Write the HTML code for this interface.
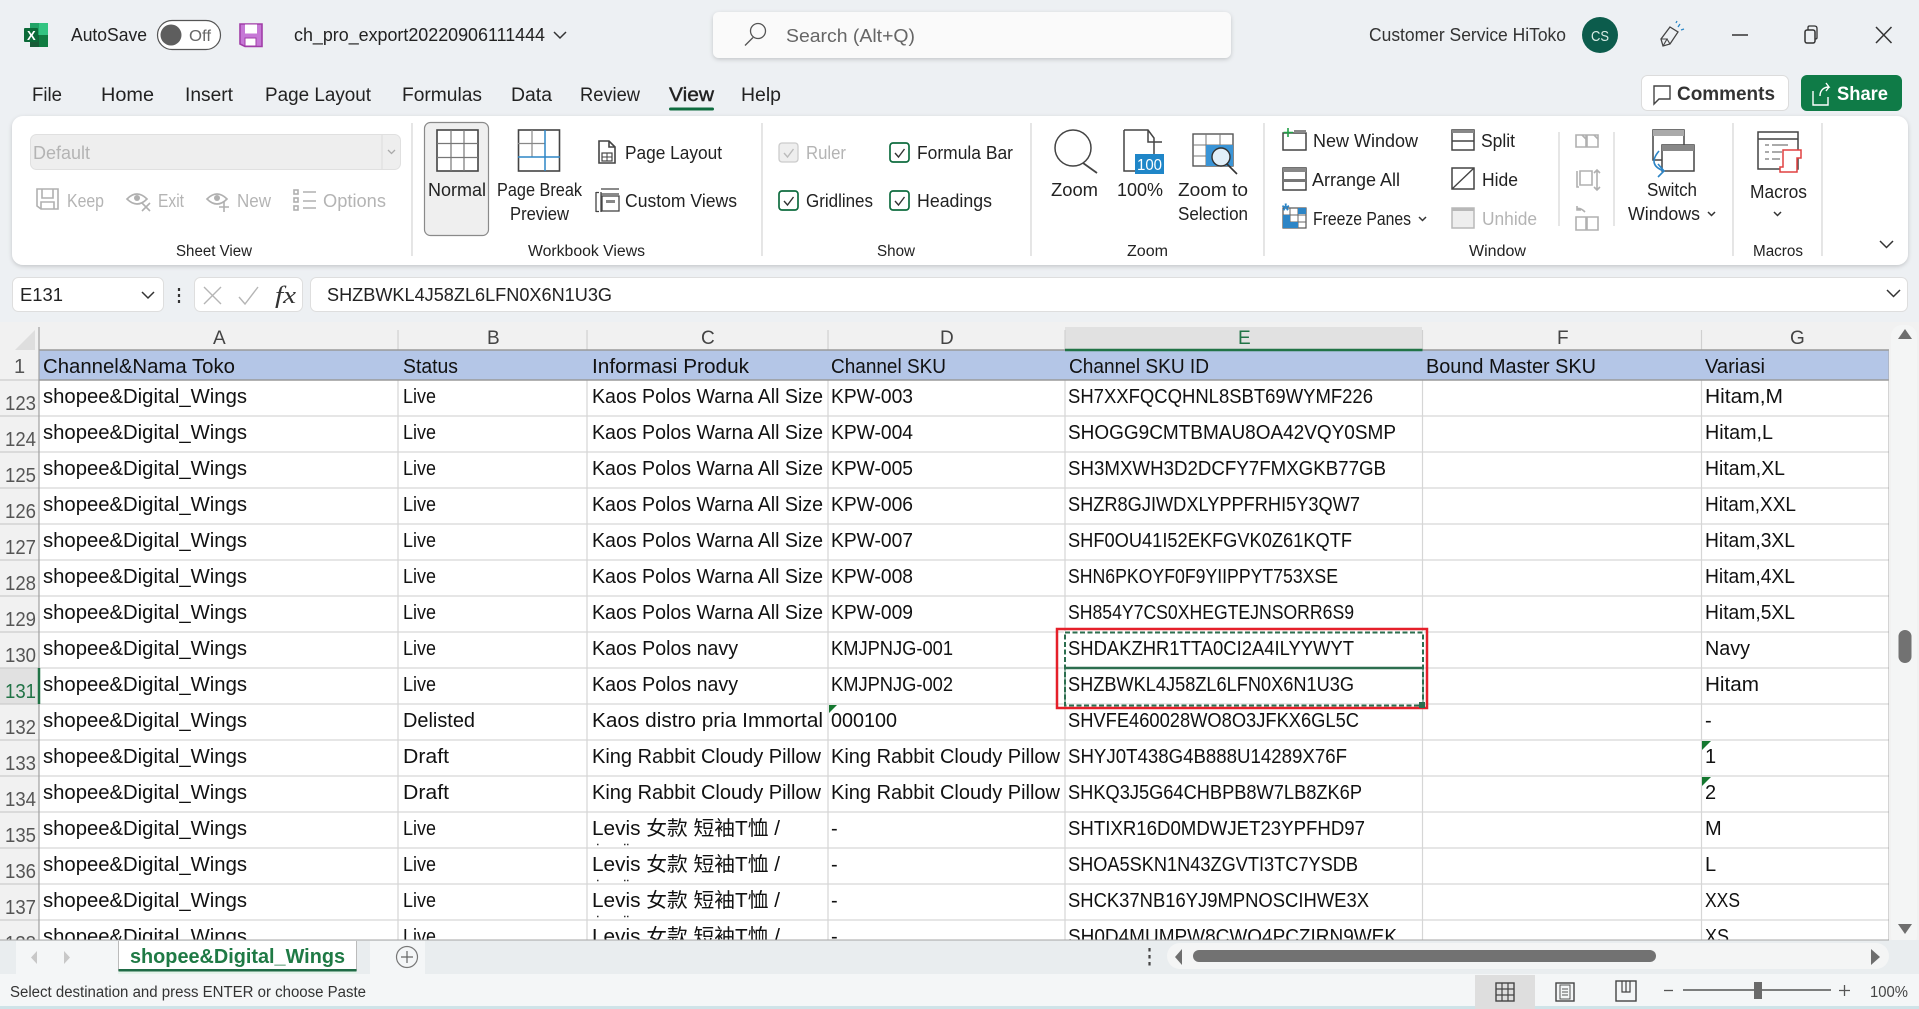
<!DOCTYPE html>
<html lang="en"><head><meta charset="utf-8"><title>ch_pro_export20220906111444 - Excel</title>
<style>
html,body{margin:0;padding:0;background:#edf0f3;width:1919px;height:1009px;overflow:hidden}
svg{position:absolute;left:0;top:0;display:block}
text{font-family:"Liberation Sans","Noto Sans CJK SC",sans-serif;fill:#222;font-size:18px;white-space:pre}
.sm{font-size:15.5px}
.g{fill:#b4b4b4}
.c{font-size:20px;fill:#111}
.n{font-size:20px;fill:#555}
.h{font-size:19px;fill:#444}
.ic{fill:none;stroke:#444;stroke-width:1.6}
.icg{fill:none;stroke:#b0b0b0;stroke-width:1.6}
.grid{stroke:#d6d6d6;stroke-width:1.2}
.sep{stroke:#d4d4d4;stroke-width:1.2}
</style></head><body>
<svg width="1919" height="1009" viewBox="0 0 1919 1009" xmlns="http://www.w3.org/2000/svg">
<defs>
<filter id="sh" x="-2%" y="-10%" width="104%" height="125%"><feDropShadow dx="0" dy="1.5" stdDeviation="2" flood-color="#000" flood-opacity=".18"/></filter>
<clipPath id="gc"><rect x="0" y="327" width="1889" height="613"/></clipPath>
</defs>

<!-- title bar -->
<rect x="30" y="23" width="18" height="24" rx="1.5" fill="#107c41"/>
<rect x="30" y="23" width="9" height="12" fill="#21a366"/><rect x="39" y="23" width="9" height="12" fill="#33c481"/>
<rect x="39" y="35" width="9" height="12" fill="#107c41"/><rect x="30" y="35" width="9" height="12" fill="#185c37"/>
<rect x="24" y="28" width="14" height="14" rx="1" fill="#0b6a38"/>
<text x="27" y="40" style="font-size:13px;fill:#fff" font-weight="bold">X</text>
<text x="71" y="41" textLength="76" lengthAdjust="spacingAndGlyphs" style="font-size:18px">AutoSave</text>
<rect x="157.500" y="20.500" width="63" height="29" rx="14.500" fill="#fff" stroke="#555" stroke-width="1.200"/>
<circle cx="171" cy="35" r="10.500" fill="#5e5e5e"/>
<text x="189" y="41" textLength="22" lengthAdjust="spacingAndGlyphs" style="font-size:16px;fill:#666">Off</text>
<path d="M240 24H262V46.500H245L240 44Z" fill="#c678d6" stroke="#a13ea8" stroke-width="1.600"/>
<rect x="245" y="24.500" width="12" height="9" fill="#fff"/><rect x="245" y="38" width="11" height="8" fill="#fff" stroke="#a13ea8"/>
<text x="294" y="41" textLength="251" lengthAdjust="spacingAndGlyphs" style="font-size:18px">ch_pro_export20220906111444</text>
<path d="M554 32l6 6 6-6" fill="none" stroke="#333" stroke-width="1.500"/>

<rect x="713" y="12" width="518" height="46" rx="6" fill="#fafafa" filter="url(#sh)"/>
<circle cx="758" cy="31" r="7.500" fill="none" stroke="#555" stroke-width="1.300"/><path d="M753 37.500L745 45.500" stroke="#555" stroke-width="1.300"/>
<text x="786" y="42" textLength="129" lengthAdjust="spacingAndGlyphs" style="font-size:18.500px;fill:#666">Search (Alt+Q)</text>

<text x="1369" y="41" textLength="197" lengthAdjust="spacingAndGlyphs" style="font-size:18px;fill:#333">Customer Service HiToko</text>
<circle cx="1600" cy="35" r="18" fill="#0c5c4c"/>
<text x="1591" y="41" textLength="18" lengthAdjust="spacingAndGlyphs" style="font-size:15px;fill:#d9ece6">CS</text>
<path d="M1670 27L1678 32L1670 44L1663 46L1661 39Z" fill="none" stroke="#444" stroke-width="1.300"/><path d="M1663 46l4-7 -6 0M1667 39l3 5" fill="none" stroke="#444" stroke-width="1.100"/>
<path d="M1678 27l2-3M1681 30l3-1M1676 23l1-2" stroke="#2b88c8" stroke-width="1.300"/>
<path d="M1732 35H1748" stroke="#333" stroke-width="1.500"/>
<rect x="1805" y="30" width="10" height="13" rx="2" fill="none" stroke="#333" stroke-width="1.500"/><path d="M1808 30v-2.500q0-1.500 1.500-1.500h5q2.500 0 2.500 2.500v9q0 1.500-1.500 1.500" fill="none" stroke="#333" stroke-width="1.300"/>
<path d="M1876 27l15.500 16M1891.500 27L1876 43" stroke="#333" stroke-width="1.500"/>

<!-- tabs -->
<text x="32" y="101" textLength="30" lengthAdjust="spacingAndGlyphs" style="font-size:19px">File</text>
<text x="101" y="101" textLength="53" lengthAdjust="spacingAndGlyphs" style="font-size:19px">Home</text>
<text x="185" y="101" textLength="48" lengthAdjust="spacingAndGlyphs" style="font-size:19px">Insert</text>
<text x="265" y="101" textLength="106" lengthAdjust="spacingAndGlyphs" style="font-size:19px">Page Layout</text>
<text x="402" y="101" textLength="80" lengthAdjust="spacingAndGlyphs" style="font-size:19px">Formulas</text>
<text x="511" y="101" textLength="41" lengthAdjust="spacingAndGlyphs" style="font-size:19px">Data</text>
<text x="580" y="101" textLength="60" lengthAdjust="spacingAndGlyphs" style="font-size:19px">Review</text>
<text x="669" y="101" textLength="45" lengthAdjust="spacingAndGlyphs" style="font-size:19px;stroke:#222;stroke-width:.4">View</text>
<text x="741" y="101" textLength="40" lengthAdjust="spacingAndGlyphs" style="font-size:19px">Help</text>
<rect x="669" y="107.500" width="45" height="3" rx="1.500" fill="#0f6c3f"/>

<rect x="1641.500" y="75.500" width="147" height="35" rx="6" fill="#fff" stroke="#dcdcdc"/>
<path d="M1654 86H1670V99H1659L1654 104Z" fill="none" stroke="#444" stroke-width="1.400"/>
<text x="1677" y="100" textLength="98" lengthAdjust="spacingAndGlyphs" font-weight="bold" style="font-size:19px;fill:#333">Comments</text>
<rect x="1801" y="75" width="101" height="36" rx="6" fill="#0f7b47"/>
<path d="M1813 91v14h15v-8M1820 96c0-6 4-9 9-9l-3-4M1829 87l-3 4" fill="none" stroke="#fff" stroke-width="1.400"/>
<text x="1837" y="100" textLength="51" lengthAdjust="spacingAndGlyphs" font-weight="bold" style="font-size:19px;fill:#fff">Share</text>

<!-- ribbon -->
<rect x="12" y="116" width="1896" height="149" rx="11" fill="#fff" filter="url(#sh)"/>

<rect x="30.500" y="134.500" width="370" height="35" rx="6" fill="#eeeeee" stroke="#e0e0e0"/>
<path d="M382 135V169" stroke="#dcdcdc"/><path d="M388 150l3.500 3.500 3.500-3.500" fill="none" stroke="#aaa" stroke-width="1.300"/>
<text x="33" y="159" textLength="57" lengthAdjust="spacingAndGlyphs" style="font-size:18px;fill:#b4b4b4">Default</text>

<path d="M37 189H58V209H41L37 206Z" class="icg"/><path d="M42 189V198H53V189M41 209V202H54V209" class="icg"/>
<text x="67" y="207" textLength="37" lengthAdjust="spacingAndGlyphs" class="g" style="font-size:18px">Keep</text>
<path d="M127 199q10-10 20 0q-10 10-20 0z" class="icg"/><circle cx="137" cy="198" r="3" fill="#b0b0b0"/><path d="M142 203l8 8M150 203l-8 8" class="icg"/>
<text x="158" y="207" textLength="26" lengthAdjust="spacingAndGlyphs" class="g" style="font-size:18px">Exit</text>
<path d="M207 199q10-10 20 0q-10 10-20 0z" class="icg"/><circle cx="217" cy="198" r="3" fill="#b0b0b0"/><path d="M224 202V212M219 207H229" class="icg"/>
<text x="237" y="207" textLength="34" lengthAdjust="spacingAndGlyphs" class="g" style="font-size:18px">New</text>
<path d="M303 192H316M303 201H316M303 208H316" class="icg"/><rect x="294" y="190" width="4" height="4" class="icg"/><rect x="294" y="198" width="4" height="4" class="icg"/><rect x="294" y="206" width="4" height="4" class="icg"/>
<text x="323" y="207" textLength="63" lengthAdjust="spacingAndGlyphs" class="g" style="font-size:18px">Options</text>
<text x="176" y="256" textLength="76" lengthAdjust="spacingAndGlyphs" class="sm">Sheet View</text>
<path d="M412 123V256" class="sep"/>

<rect x="424.500" y="122.500" width="64" height="113" rx="6" fill="#efefef" stroke="#8a8a8a" stroke-width="1.200"/>
<rect x="437" y="130" width="41" height="41" fill="#fff" stroke="#444" stroke-width="1.600"/><path d="M451 130V171M464 130V171M437 143.500H478M437 157.500H478" stroke="#777" stroke-width="1.200"/>
<text x="428" y="196" textLength="58" lengthAdjust="spacingAndGlyphs" style="font-size:18px">Normal</text>
<rect x="518.500" y="130" width="41" height="41" fill="#fff" stroke="#444" stroke-width="1.600"/><path d="M532 130V157M518 143.500H545" stroke="#888" stroke-width="1.200"/><path d="M545 130V171M518 157H560" stroke="#2d85c6" stroke-width="1.500"/>
<text x="497" y="196" textLength="85" lengthAdjust="spacingAndGlyphs" style="font-size:18px">Page Break</text>
<text x="510" y="220" textLength="59" lengthAdjust="spacingAndGlyphs" style="font-size:18px">Preview</text>
<path d="M599 141H609L615 147V163H599Z" class="ic"/><path d="M609 141V147H615" class="ic"/><rect x="602" y="153" width="10" height="8" fill="none" stroke="#444" stroke-width="1.200"/><path d="M607 153v8M602 157h10" stroke="#444"/>
<text x="625" y="159" textLength="97" lengthAdjust="spacingAndGlyphs" style="font-size:18px">Page Layout</text>
<path d="M601 192V212M596 192.500H599M596 211.500H599M596 192V212" fill="none" stroke="#444" stroke-width="1.300"/><path d="M601 189H619M601 194H619" stroke="#444" stroke-width="1.300"/><rect x="602" y="196" width="17" height="15" fill="none" stroke="#444" stroke-width="1.300"/><path d="M606 200H615V203H606Z" fill="#888"/>
<text x="625" y="207" textLength="112" lengthAdjust="spacingAndGlyphs" style="font-size:18px">Custom Views</text>
<text x="528" y="256" textLength="117" lengthAdjust="spacingAndGlyphs" class="sm">Workbook Views</text>
<path d="M762 123V256" class="sep"/>

<rect x="779" y="143" width="19" height="19" rx="3" fill="#eee" stroke="#ccc" stroke-width="1.300"/><path d="M784 153l3.500 4 6-8" fill="none" stroke="#bbb" stroke-width="1.400"/>
<text x="806" y="159" textLength="40" lengthAdjust="spacingAndGlyphs" class="g" style="font-size:18px">Ruler</text>
<rect x="890" y="143" width="19" height="19" rx="3" fill="#fff" stroke="#0f6c3f" stroke-width="1.700"/><path d="M895 153l3.500 4 6-8" fill="none" stroke="#333" stroke-width="1.400"/>
<text x="917" y="159" textLength="96" lengthAdjust="spacingAndGlyphs" style="font-size:18px">Formula Bar</text>
<rect x="779" y="191" width="19" height="19" rx="3" fill="#fff" stroke="#0f6c3f" stroke-width="1.700"/><path d="M784 201l3.500 4 6-8" fill="none" stroke="#333" stroke-width="1.400"/>
<text x="806" y="207" textLength="67" lengthAdjust="spacingAndGlyphs" style="font-size:18px">Gridlines</text>
<rect x="890" y="191" width="19" height="19" rx="3" fill="#fff" stroke="#0f6c3f" stroke-width="1.700"/><path d="M895 201l3.500 4 6-8" fill="none" stroke="#333" stroke-width="1.400"/>
<text x="917" y="207" textLength="75" lengthAdjust="spacingAndGlyphs" style="font-size:18px">Headings</text>
<text x="877" y="256" textLength="38" lengthAdjust="spacingAndGlyphs" class="sm">Show</text>
<path d="M1031 123V256" class="sep"/>

<circle cx="1073" cy="148" r="18" fill="none" stroke="#444" stroke-width="1.500"/><path d="M1083 163L1097 173" stroke="#444" stroke-width="1.800"/>
<text x="1051" y="196" textLength="47" lengthAdjust="spacingAndGlyphs" style="font-size:18px">Zoom</text>
<path d="M1124 130H1148L1154 138V154M1135 171H1124V130M1148 130V142H1162" fill="none" stroke="#444" stroke-width="1.500"/>
<rect x="1135" y="154" width="29" height="20" fill="#1f86c8"/>
<text x="1137" y="170" textLength="25" lengthAdjust="spacingAndGlyphs" style="font-size:16px;fill:#fff">100</text>
<text x="1117" y="196" textLength="46" lengthAdjust="spacingAndGlyphs" style="font-size:18px">100%</text>
<rect x="1193" y="134" width="40" height="32" fill="none" stroke="#555" stroke-width="1.400"/><path d="M1206 134V166M1220 134V166M1193 145H1233M1193 156H1233" stroke="#777"/>
<rect x="1206" y="145" width="27" height="21" fill="#3a94d6"/>
<circle cx="1221" cy="157" r="9" fill="#fff" fill-opacity=".85" stroke="#333" stroke-width="1.400"/><path d="M1227 164L1237 174" stroke="#333" stroke-width="1.600"/>
<text x="1178" y="196" textLength="70" lengthAdjust="spacingAndGlyphs" style="font-size:18px">Zoom to</text>
<text x="1178" y="220" textLength="70" lengthAdjust="spacingAndGlyphs" style="font-size:18px">Selection</text>
<text x="1127" y="256" textLength="41" lengthAdjust="spacingAndGlyphs" class="sm">Zoom</text>
<path d="M1264 123V256" class="sep"/>

<rect x="1283" y="133" width="23" height="17" fill="#fff" stroke="#444" stroke-width="1.500"/><rect x="1294" y="130" width="12" height="3" fill="#888"/><path d="M1288 128V137M1283.500 132.500H1293" stroke="#22a047" stroke-width="1.600"/>
<text x="1313" y="147" textLength="105" lengthAdjust="spacingAndGlyphs" style="font-size:18px">New Window</text>
<rect x="1283" y="168" width="23" height="22" fill="#fff" stroke="#444" stroke-width="1.500"/><rect x="1283" y="168" width="23" height="4" fill="#888"/><rect x="1283" y="179" width="23" height="3" fill="#777"/>
<text x="1312" y="186" textLength="88" lengthAdjust="spacingAndGlyphs" style="font-size:18px">Arrange All</text>
<rect x="1283" y="208" width="23" height="20" fill="#fff" stroke="#555" stroke-width="1.200"/><path d="M1290 208V228M1298 208V228M1283 215H1306M1283 222H1306" stroke="#666"/><rect x="1283" y="215" width="7" height="13" fill="#2d85c6"/><rect x="1290" y="222" width="8" height="6" fill="#2d85c6"/><rect x="1298" y="208" width="8" height="6" fill="#2d85c6"/>
<text x="1282" y="217" style="font-size:19px;fill:#2d85c6" font-weight="bold">*</text>
<text x="1313" y="225" textLength="98" lengthAdjust="spacingAndGlyphs" style="font-size:18px">Freeze Panes</text>
<path d="M1419 217l3.500 3.500 3.500-3.500" fill="none" stroke="#333" stroke-width="1.500"/>
<rect x="1452" y="130" width="22" height="20" fill="#fff" stroke="#444" stroke-width="1.500"/><rect x="1452" y="130" width="22" height="3" fill="#888"/><path d="M1452 141H1474" stroke="#444" stroke-width="1.400"/>
<text x="1481" y="147" textLength="34" lengthAdjust="spacingAndGlyphs" style="font-size:18px">Split</text>
<rect x="1452" y="168" width="22" height="21" fill="#fff" stroke="#444" stroke-width="1.500"/><path d="M1452 189L1474 168" stroke="#444" stroke-width="1.400"/>
<text x="1482" y="186" textLength="36" lengthAdjust="spacingAndGlyphs" style="font-size:18px">Hide</text>
<rect x="1452" y="208" width="22" height="20" fill="#eee" stroke="#b8b8b8" stroke-width="1.500"/><rect x="1452" y="208" width="22" height="3" fill="#b8b8b8"/>
<text x="1482" y="225" textLength="55" lengthAdjust="spacingAndGlyphs" class="g" style="font-size:18px">Unhide</text>
<path d="M1559 132V226" class="sep"/>
<path d="M1576 135H1586V147H1576ZM1587 135H1598V147H1587Z" class="icg"/><path d="M1582 135L1586 139M1594 135L1598 139" class="icg"/>
<path d="M1580 171H1592V185H1580ZM1577 171V187H1579" class="icg"/><path d="M1597 170V190M1594 173l3-3 3 3M1594 187l3 3 3-3" class="icg"/>
<path d="M1576 217H1586V230H1576ZM1587 217H1598V230H1587Z" class="icg"/><path d="M1585 212q-5-5-8-3M1577 206v4h4" class="icg"/>
<path d="M1614 132V226" class="sep"/>
<rect x="1653" y="130" width="31" height="30" fill="#fff" stroke="#444" stroke-width="1.500"/><rect x="1653" y="130" width="31" height="6" fill="#aaa"/>
<rect x="1662" y="145" width="32" height="26" fill="#fff" stroke="#444" stroke-width="1.500"/><rect x="1662" y="145" width="32" height="6" fill="#888"/>
<path d="M1659 151q-12 14 5 20M1658 164l6 7-6 6" fill="none" stroke="#2d85c6" stroke-width="1.600"/>
<text x="1647" y="196" textLength="50" lengthAdjust="spacingAndGlyphs" style="font-size:18px">Switch</text>
<text x="1628" y="220" textLength="72" lengthAdjust="spacingAndGlyphs" style="font-size:18px">Windows</text>
<path d="M1708 212l3.500 3.500 3.500-3.500" fill="none" stroke="#333" stroke-width="1.500"/>
<path d="M1733 123V256" class="sep"/>
<rect x="1758" y="132" width="40" height="37" fill="#fff" stroke="#444" stroke-width="1.500"/><path d="M1758 139H1798" stroke="#444" stroke-width="1.500"/>
<path d="M1765 145H1769M1772 145H1788M1765 152H1769M1772 152H1782M1765 159H1769M1772 159H1780" stroke="#777" stroke-width="1.300"/>
<path d="M1783 150H1801V158H1797V172H1780V167H1783Z" fill="#fff" stroke="#e04040" stroke-width="1.500"/>
<text x="1750" y="198" textLength="57" lengthAdjust="spacingAndGlyphs" style="font-size:18px">Macros</text>
<path d="M1774 212l3.500 3.500 3.500-3.500" fill="none" stroke="#333" stroke-width="1.500"/>
<text x="1469" y="256" textLength="57" lengthAdjust="spacingAndGlyphs" class="sm">Window</text>
<text x="1753" y="256" textLength="50" lengthAdjust="spacingAndGlyphs" class="sm">Macros</text>
<path d="M1822 123V256" class="sep"/>
<path d="M1880 241l6.500 6.500 6.500-6.500" fill="none" stroke="#333" stroke-width="1.500"/>

<!-- formula bar -->
<rect x="12.500" y="277.500" width="151" height="34" rx="6" fill="#fff" stroke="#dedede"/>
<text x="20" y="301" textLength="43" lengthAdjust="spacingAndGlyphs" style="font-size:18px">E131</text>
<path d="M142 292l6 6 6-6" fill="none" stroke="#333" stroke-width="1.500"/>
<path d="M179 288v3M179 294v3M179 300v3" stroke="#333" stroke-width="2.200"/>
<rect x="194.500" y="277.500" width="108" height="34" rx="6" fill="#fff" stroke="#dedede"/>
<path d="M204 287l17 17M221 287l-17 17" stroke="#b5b5b5" stroke-width="1.400"/>
<path d="M239 297l6 7 13-17" fill="none" stroke="#b5b5b5" stroke-width="1.400"/>
<text x="275" y="303" textLength="21" lengthAdjust="spacingAndGlyphs" style="font-family:'Liberation Serif',serif;font-style:italic;font-size:24px;fill:#333">fx</text>
<rect x="310.500" y="277.500" width="1597" height="34" rx="6" fill="#fff" stroke="#dedede"/>
<text x="327" y="301" textLength="285" lengthAdjust="spacingAndGlyphs" style="font-size:18px">SHZBWKL4J58ZL6LFN0X6N1U3G</text>
<path d="M1887 290l6.500 6.500 6.500-6.500" fill="none" stroke="#333" stroke-width="1.500"/>

<!-- grid backgrounds -->
<rect x="0" y="322" width="1919" height="618" fill="#f1f1f1"/>
<rect x="39" y="350" width="1850" height="590" fill="#fff"/>
<rect x="39" y="350" width="1850" height="30" fill="#b4c6e7"/>
<path d="M15 350L35 330V350Z" fill="#dedede"/>
<rect x="1065" y="327" width="357" height="23" fill="#e1e1e1"/>
<rect x="0" y="668" width="39" height="36" fill="#e1e1e1"/>

<g clip-path="url(#gc)">
<!-- row lines -->
<path class="grid" d="M39 416H1889M39 452H1889M39 488H1889M39 524H1889M39 560H1889M39 596H1889M39 632H1889M39 668H1889M39 704H1889M39 740H1889M39 776H1889M39 812H1889M39 848H1889M39 884H1889M39 920H1889"/>
<path d="M0 380H39M0 416H39M0 452H39M0 488H39M0 524H39M0 560H39M0 596H39M0 632H39M0 668H39M0 704H39M0 740H39M0 776H39M0 812H39M0 848H39M0 884H39M0 920H39" stroke="#cdcdcd" stroke-width="1.200"/>
<path class="grid" d="M398 380V940M587 380V940M828 380V940M1065 380V940M1422.500 380V940M1701.500 380V940"/>
<path d="M398 330V350M587 330V350M828 330V350M1065 330V350M1422.500 330V350M1701.500 330V350" stroke="#d0d0d0" stroke-width="1.200"/>
<path d="M39 350H1889M39 380H1889" stroke="#9a9a9a" stroke-width="1.500"/>
<path d="M39 327V940" stroke="#a0a0a0" stroke-width="1.200"/>
<path d="M1889 350V940" stroke="#a8a8a8" stroke-width="1"/>
<path d="M1065 350H1422.500" stroke="#217346" stroke-width="2.500"/>
<path d="M39 668V704" stroke="#217346" stroke-width="2.500"/>

<!-- column headers -->
<text x="213" y="344" class="h">A</text><text x="487" y="344" class="h">B</text><text x="701" y="344" class="h">C</text><text x="940" y="344" class="h">D</text>
<text x="1238" y="344" class="h" style="fill:#217346;font-size:19px">E</text><text x="1557" y="344" class="h">F</text><text x="1790" y="344" class="h">G</text>

<!-- row 1 -->
<text x="14" y="373" class="n">1</text>
<text x="43" y="373" textLength="192" lengthAdjust="spacingAndGlyphs" class="c">Channel&amp;Nama Toko</text>
<text x="403" y="373" textLength="55" lengthAdjust="spacingAndGlyphs" class="c">Status</text>
<text x="592" y="373" textLength="157" lengthAdjust="spacingAndGlyphs" class="c">Informasi Produk</text>
<text x="831" y="373" textLength="115" lengthAdjust="spacingAndGlyphs" class="c">Channel SKU</text>
<text x="1069" y="373" textLength="140" lengthAdjust="spacingAndGlyphs" class="c">Channel SKU ID</text>
<text x="1426" y="373" textLength="170" lengthAdjust="spacingAndGlyphs" class="c">Bound Master SKU</text>
<text x="1705" y="373" textLength="60" lengthAdjust="spacingAndGlyphs" class="c">Variasi</text>

<!-- 123 -->
<text x="5" y="410" textLength="31" lengthAdjust="spacingAndGlyphs" class="n">123</text>
<text x="43" y="403" textLength="204" lengthAdjust="spacingAndGlyphs" class="c">shopee&amp;Digital_Wings</text><text x="403" y="403" textLength="33" lengthAdjust="spacingAndGlyphs" class="c">Live</text><text x="592" y="403" textLength="231" lengthAdjust="spacingAndGlyphs" class="c">Kaos Polos Warna All Size</text><text x="831" y="403" textLength="82" lengthAdjust="spacingAndGlyphs" class="c">KPW-003</text><text x="1068" y="403" textLength="305" lengthAdjust="spacingAndGlyphs" class="c">SH7XXFQCQHNL8SBT69WYMF226</text><text x="1705" y="403" textLength="78" lengthAdjust="spacingAndGlyphs" class="c">Hitam,M</text>
<!-- 124 -->
<text x="5" y="446" textLength="31" lengthAdjust="spacingAndGlyphs" class="n">124</text>
<text x="43" y="439" textLength="204" lengthAdjust="spacingAndGlyphs" class="c">shopee&amp;Digital_Wings</text><text x="403" y="439" textLength="33" lengthAdjust="spacingAndGlyphs" class="c">Live</text><text x="592" y="439" textLength="231" lengthAdjust="spacingAndGlyphs" class="c">Kaos Polos Warna All Size</text><text x="831" y="439" textLength="82" lengthAdjust="spacingAndGlyphs" class="c">KPW-004</text><text x="1068" y="439" textLength="328" lengthAdjust="spacingAndGlyphs" class="c">SHOGG9CMTBMAU8OA42VQY0SMP</text><text x="1705" y="439" textLength="68" lengthAdjust="spacingAndGlyphs" class="c">Hitam,L</text>
<!-- 125 -->
<text x="5" y="482" textLength="31" lengthAdjust="spacingAndGlyphs" class="n">125</text>
<text x="43" y="475" textLength="204" lengthAdjust="spacingAndGlyphs" class="c">shopee&amp;Digital_Wings</text><text x="403" y="475" textLength="33" lengthAdjust="spacingAndGlyphs" class="c">Live</text><text x="592" y="475" textLength="231" lengthAdjust="spacingAndGlyphs" class="c">Kaos Polos Warna All Size</text><text x="831" y="475" textLength="82" lengthAdjust="spacingAndGlyphs" class="c">KPW-005</text><text x="1068" y="475" textLength="318" lengthAdjust="spacingAndGlyphs" class="c">SH3MXWH3D2DCFY7FMXGKB77GB</text><text x="1705" y="475" textLength="80" lengthAdjust="spacingAndGlyphs" class="c">Hitam,XL</text>
<!-- 126 -->
<text x="5" y="518" textLength="31" lengthAdjust="spacingAndGlyphs" class="n">126</text>
<text x="43" y="511" textLength="204" lengthAdjust="spacingAndGlyphs" class="c">shopee&amp;Digital_Wings</text><text x="403" y="511" textLength="33" lengthAdjust="spacingAndGlyphs" class="c">Live</text><text x="592" y="511" textLength="231" lengthAdjust="spacingAndGlyphs" class="c">Kaos Polos Warna All Size</text><text x="831" y="511" textLength="82" lengthAdjust="spacingAndGlyphs" class="c">KPW-006</text><text x="1068" y="511" textLength="292" lengthAdjust="spacingAndGlyphs" class="c">SHZR8GJIWDXLYPPFRHI5Y3QW7</text><text x="1705" y="511" textLength="91" lengthAdjust="spacingAndGlyphs" class="c">Hitam,XXL</text>
<!-- 127 -->
<text x="5" y="554" textLength="31" lengthAdjust="spacingAndGlyphs" class="n">127</text>
<text x="43" y="547" textLength="204" lengthAdjust="spacingAndGlyphs" class="c">shopee&amp;Digital_Wings</text><text x="403" y="547" textLength="33" lengthAdjust="spacingAndGlyphs" class="c">Live</text><text x="592" y="547" textLength="231" lengthAdjust="spacingAndGlyphs" class="c">Kaos Polos Warna All Size</text><text x="831" y="547" textLength="82" lengthAdjust="spacingAndGlyphs" class="c">KPW-007</text><text x="1068" y="547" textLength="284" lengthAdjust="spacingAndGlyphs" class="c">SHF0OU41I52EKFGVK0Z61KQTF</text><text x="1705" y="547" textLength="90" lengthAdjust="spacingAndGlyphs" class="c">Hitam,3XL</text>
<!-- 128 -->
<text x="5" y="590" textLength="31" lengthAdjust="spacingAndGlyphs" class="n">128</text>
<text x="43" y="583" textLength="204" lengthAdjust="spacingAndGlyphs" class="c">shopee&amp;Digital_Wings</text><text x="403" y="583" textLength="33" lengthAdjust="spacingAndGlyphs" class="c">Live</text><text x="592" y="583" textLength="231" lengthAdjust="spacingAndGlyphs" class="c">Kaos Polos Warna All Size</text><text x="831" y="583" textLength="82" lengthAdjust="spacingAndGlyphs" class="c">KPW-008</text><text x="1068" y="583" textLength="270" lengthAdjust="spacingAndGlyphs" class="c">SHN6PKOYF0F9YIIPPYT753XSE</text><text x="1705" y="583" textLength="90" lengthAdjust="spacingAndGlyphs" class="c">Hitam,4XL</text>
<!-- 129 -->
<text x="5" y="626" textLength="31" lengthAdjust="spacingAndGlyphs" class="n">129</text>
<text x="43" y="619" textLength="204" lengthAdjust="spacingAndGlyphs" class="c">shopee&amp;Digital_Wings</text><text x="403" y="619" textLength="33" lengthAdjust="spacingAndGlyphs" class="c">Live</text><text x="592" y="619" textLength="231" lengthAdjust="spacingAndGlyphs" class="c">Kaos Polos Warna All Size</text><text x="831" y="619" textLength="82" lengthAdjust="spacingAndGlyphs" class="c">KPW-009</text><text x="1068" y="619" textLength="286" lengthAdjust="spacingAndGlyphs" class="c">SH854Y7CS0XHEGTEJNSORR6S9</text><text x="1705" y="619" textLength="90" lengthAdjust="spacingAndGlyphs" class="c">Hitam,5XL</text>
<!-- 130 -->
<text x="5" y="662" textLength="31" lengthAdjust="spacingAndGlyphs" class="n">130</text>
<text x="43" y="655" textLength="204" lengthAdjust="spacingAndGlyphs" class="c">shopee&amp;Digital_Wings</text><text x="403" y="655" textLength="33" lengthAdjust="spacingAndGlyphs" class="c">Live</text><text x="592" y="655" textLength="146" lengthAdjust="spacingAndGlyphs" class="c">Kaos Polos navy</text><text x="831" y="655" textLength="122" lengthAdjust="spacingAndGlyphs" class="c">KMJPNJG-001</text><text x="1068" y="655" textLength="286" lengthAdjust="spacingAndGlyphs" class="c">SHDAKZHR1TTA0CI2A4ILYYWYT</text><text x="1705" y="655" textLength="45" lengthAdjust="spacingAndGlyphs" class="c">Navy</text>
<!-- 131 -->
<text x="5" y="698" textLength="31" lengthAdjust="spacingAndGlyphs" class="n" style="fill:#217346;font-size:20px">131</text>
<text x="43" y="691" textLength="204" lengthAdjust="spacingAndGlyphs" class="c">shopee&amp;Digital_Wings</text><text x="403" y="691" textLength="33" lengthAdjust="spacingAndGlyphs" class="c">Live</text><text x="592" y="691" textLength="146" lengthAdjust="spacingAndGlyphs" class="c">Kaos Polos navy</text><text x="831" y="691" textLength="122" lengthAdjust="spacingAndGlyphs" class="c">KMJPNJG-002</text><text x="1068" y="691" textLength="286" lengthAdjust="spacingAndGlyphs" class="c">SHZBWKL4J58ZL6LFN0X6N1U3G</text><text x="1705" y="691" textLength="54" lengthAdjust="spacingAndGlyphs" class="c">Hitam</text>
<!-- 132 -->
<text x="5" y="734" textLength="31" lengthAdjust="spacingAndGlyphs" class="n">132</text>
<text x="43" y="727" textLength="204" lengthAdjust="spacingAndGlyphs" class="c">shopee&amp;Digital_Wings</text><text x="403" y="727" textLength="72" lengthAdjust="spacingAndGlyphs" class="c">Delisted</text><text x="592" y="727" textLength="231" lengthAdjust="spacingAndGlyphs" class="c">Kaos distro pria Immortal</text><text x="831" y="727" textLength="66" lengthAdjust="spacingAndGlyphs" class="c">000100</text><text x="1068" y="727" textLength="291" lengthAdjust="spacingAndGlyphs" class="c">SHVFE460028WO8O3JFKX6GL5C</text><text x="1705" y="727" class="c">-</text>
<!-- 133 -->
<text x="5" y="770" textLength="31" lengthAdjust="spacingAndGlyphs" class="n">133</text>
<text x="43" y="763" textLength="204" lengthAdjust="spacingAndGlyphs" class="c">shopee&amp;Digital_Wings</text><text x="403" y="763" textLength="46" lengthAdjust="spacingAndGlyphs" class="c">Draft</text><text x="592" y="763" textLength="229" lengthAdjust="spacingAndGlyphs" class="c">King Rabbit Cloudy Pillow</text><text x="831" y="763" textLength="229" lengthAdjust="spacingAndGlyphs" class="c">King Rabbit Cloudy Pillow</text><text x="1068" y="763" textLength="279" lengthAdjust="spacingAndGlyphs" class="c">SHYJ0T438G4B888U14289X76F</text><text x="1705" y="763" class="c">1</text>
<!-- 134 -->
<text x="5" y="806" textLength="31" lengthAdjust="spacingAndGlyphs" class="n">134</text>
<text x="43" y="799" textLength="204" lengthAdjust="spacingAndGlyphs" class="c">shopee&amp;Digital_Wings</text><text x="403" y="799" textLength="46" lengthAdjust="spacingAndGlyphs" class="c">Draft</text><text x="592" y="799" textLength="229" lengthAdjust="spacingAndGlyphs" class="c">King Rabbit Cloudy Pillow</text><text x="831" y="799" textLength="229" lengthAdjust="spacingAndGlyphs" class="c">King Rabbit Cloudy Pillow</text><text x="1068" y="799" textLength="294" lengthAdjust="spacingAndGlyphs" class="c">SHKQ3J5G64CHBPB8W7LB8ZK6P</text><text x="1705" y="799" class="c">2</text>
<!-- 135 -->
<text x="5" y="842" textLength="31" lengthAdjust="spacingAndGlyphs" class="n">135</text>
<text x="43" y="835" textLength="204" lengthAdjust="spacingAndGlyphs" class="c">shopee&amp;Digital_Wings</text><text x="403" y="835" textLength="33" lengthAdjust="spacingAndGlyphs" class="c">Live</text><text x="592" y="835" textLength="188" lengthAdjust="spacingAndGlyphs" class="c">Levis 女款 短袖T恤 /</text><text x="831" y="835" class="c">-</text><text x="1068" y="835" textLength="297" lengthAdjust="spacingAndGlyphs" class="c">SHTIXR16D0MDWJET23YPFHD97</text><text x="1705" y="835" class="c">M</text>
<!-- 136 -->
<text x="5" y="878" textLength="31" lengthAdjust="spacingAndGlyphs" class="n">136</text>
<text x="43" y="871" textLength="204" lengthAdjust="spacingAndGlyphs" class="c">shopee&amp;Digital_Wings</text><text x="403" y="871" textLength="33" lengthAdjust="spacingAndGlyphs" class="c">Live</text><text x="592" y="871" textLength="188" lengthAdjust="spacingAndGlyphs" class="c">Levis 女款 短袖T恤 /</text><text x="831" y="871" class="c">-</text><text x="1068" y="871" textLength="290" lengthAdjust="spacingAndGlyphs" class="c">SHOA5SKN1N43ZGVTI3TC7YSDB</text><text x="1705" y="871" class="c">L</text>
<!-- 137 -->
<text x="5" y="914" textLength="31" lengthAdjust="spacingAndGlyphs" class="n">137</text>
<text x="43" y="907" textLength="204" lengthAdjust="spacingAndGlyphs" class="c">shopee&amp;Digital_Wings</text><text x="403" y="907" textLength="33" lengthAdjust="spacingAndGlyphs" class="c">Live</text><text x="592" y="907" textLength="188" lengthAdjust="spacingAndGlyphs" class="c">Levis 女款 短袖T恤 /</text><text x="831" y="907" class="c">-</text><text x="1068" y="907" textLength="301" lengthAdjust="spacingAndGlyphs" class="c">SHCK37NB16YJ9MPNOSCIHWE3X</text><text x="1705" y="907" textLength="35" lengthAdjust="spacingAndGlyphs" class="c">XXS</text>
<!-- 138 -->
<text x="5" y="950" textLength="31" lengthAdjust="spacingAndGlyphs" class="n">138</text>
<text x="43" y="943" textLength="204" lengthAdjust="spacingAndGlyphs" class="c">shopee&amp;Digital_Wings</text><text x="403" y="943" textLength="33" lengthAdjust="spacingAndGlyphs" class="c">Live</text><text x="592" y="943" textLength="188" lengthAdjust="spacingAndGlyphs" class="c">Levis 女款 短袖T恤 /</text><text x="831" y="943" class="c">-</text><text x="1068" y="943" textLength="329" lengthAdjust="spacingAndGlyphs" class="c">SH0D4MUMPW8CWO4PCZIRN9WEK</text><text x="1705" y="943" textLength="24" lengthAdjust="spacingAndGlyphs" class="c">XS</text>

<!-- clipped second-line specks -->
<path d="M597 844.500h1.500M624 844.500h1.500M627 844.500h1.500M597 880.500h1.500M624 880.500h1.500M627 880.500h1.500M597 916.500h1.500M624 916.500h1.500M627 916.500h1.500" stroke="#333" stroke-width="1.500"/>

<!-- green triangles -->
<path d="M829 705h8l-8 8z" fill="#14772f"/><path d="M1702 741h9l-9 9z" fill="#14772f"/><path d="M1702 777h9l-9 9z" fill="#14772f"/>

<!-- copy selection -->
<rect x="1065" y="632.500" width="358" height="73" fill="none" stroke="#fff" stroke-width="2.500"/>
<rect x="1065" y="632.500" width="358" height="73" fill="none" stroke="#2c6e4f" stroke-width="2" stroke-dasharray="5 2.500"/>
<path d="M1065 668H1423" stroke="#2c6e4f" stroke-width="2.500"/>
<path d="M1065 668V706M1423 668V706" stroke="#2c6e4f" stroke-width="1" stroke-dasharray="5 2.500"/>
<rect x="1057" y="629" width="370" height="79" fill="none" stroke="#e5202a" stroke-width="2.500"/>
<rect x="1419" y="702" width="6" height="6" fill="#2c6e4f"/>
</g>

<!-- vertical scroll -->
<rect x="1890" y="322" width="29" height="618" fill="#f1f1f1"/>
<rect x="1891" y="325" width="26" height="622" rx="11" fill="#f4f5f5"/>
<path d="M1905 329l7 10h-14z" fill="#6e6e6e"/>
<rect x="1898.500" y="630" width="13" height="33" rx="6.500" fill="#727272"/>
<path d="M1905 934l7-10h-14z" fill="#6e6e6e"/>

<!-- tab bar -->
<rect x="0" y="940" width="1919" height="34" fill="#e9edef"/>
<path d="M0 940H1889" stroke="#a5a5a5" stroke-width="1"/>
<rect x="16" y="941" width="102" height="33" fill="#f4f6f7"/>
<path d="M37 951l-6 6.500 6 6.500z" fill="#c8c8c8"/><path d="M64 951l6 6.500-6 6.500z" fill="#c8c8c8"/>
<rect x="118.500" y="941" width="238" height="30" fill="#fff"/>
<path d="M118.500 941V971M356.500 941V971" stroke="#bbb"/>
<rect x="118.500" y="969" width="238" height="2.500" fill="#1f6b46"/>
<rect x="118.500" y="971.500" width="238" height="2.500" fill="#e4f3ea"/>
<text x="130" y="963" textLength="215" lengthAdjust="spacingAndGlyphs" font-weight="bold" style="font-size:20px;fill:#1f7a45">shopee&amp;Digital_Wings</text>
<rect x="370" y="941" width="55" height="33" fill="#f4f6f7"/>
<circle cx="407" cy="957" r="10.500" fill="none" stroke="#777" stroke-width="1.200"/><path d="M407 951V963M401 957H413" stroke="#666" stroke-width="1.200"/>
<path d="M1149.500 948v3.500M1149.500 955v3.500M1149.500 962v3.500" stroke="#444" stroke-width="2.200"/>
<rect x="1167" y="943" width="722" height="26" rx="13" fill="#f4f5f5"/>
<path d="M1182 949l-7 8 7 8z" fill="#6e6e6e"/>
<rect x="1193" y="950" width="463" height="12" rx="6" fill="#727272"/>
<path d="M1871 949l9 8-9 8z" fill="#6e6e6e"/>

<!-- status bar -->
<rect x="0" y="974" width="1919" height="32" fill="#f4f6f7"/>
<rect x="0" y="1006" width="1919" height="3" fill="#cfe3e8"/>
<text x="10" y="997" textLength="356" lengthAdjust="spacingAndGlyphs" style="font-size:15.500px;fill:#333">Select destination and press ENTER or choose Paste</text>
<rect x="1475" y="975" width="60" height="34" fill="#dedede"/>
<rect x="1496" y="983" width="18" height="18" fill="none" stroke="#444" stroke-width="1.400"/><path d="M1502 983V1001M1508 983V1001M1496 989H1514M1496 995H1514" stroke="#444" stroke-width="1.200"/>
<rect x="1556" y="983" width="18" height="18" fill="none" stroke="#444" stroke-width="1.400"/><rect x="1560" y="985" width="10" height="14" fill="none" stroke="#555"/><path d="M1562 989h6M1562 992h6M1562 995h6" stroke="#555"/>
<rect x="1616" y="981" width="20" height="20" fill="none" stroke="#444" stroke-width="1.400"/><path d="M1622 981V992H1630V981M1626 981V992" fill="none" stroke="#444" stroke-width="1.200"/>
<path d="M1664 990.500H1673" stroke="#555" stroke-width="1.300"/>
<path d="M1683 990H1831" stroke="#555" stroke-width="1.500"/>
<rect x="1754" y="982" width="8" height="17" fill="#6a6a6a"/>
<path d="M1839 990.500H1850M1844.500 985V996" stroke="#555" stroke-width="1.300"/>
<text x="1870" y="997" textLength="38" lengthAdjust="spacingAndGlyphs" style="font-size:16px;fill:#444">100%</text>
</svg>
</body></html>
